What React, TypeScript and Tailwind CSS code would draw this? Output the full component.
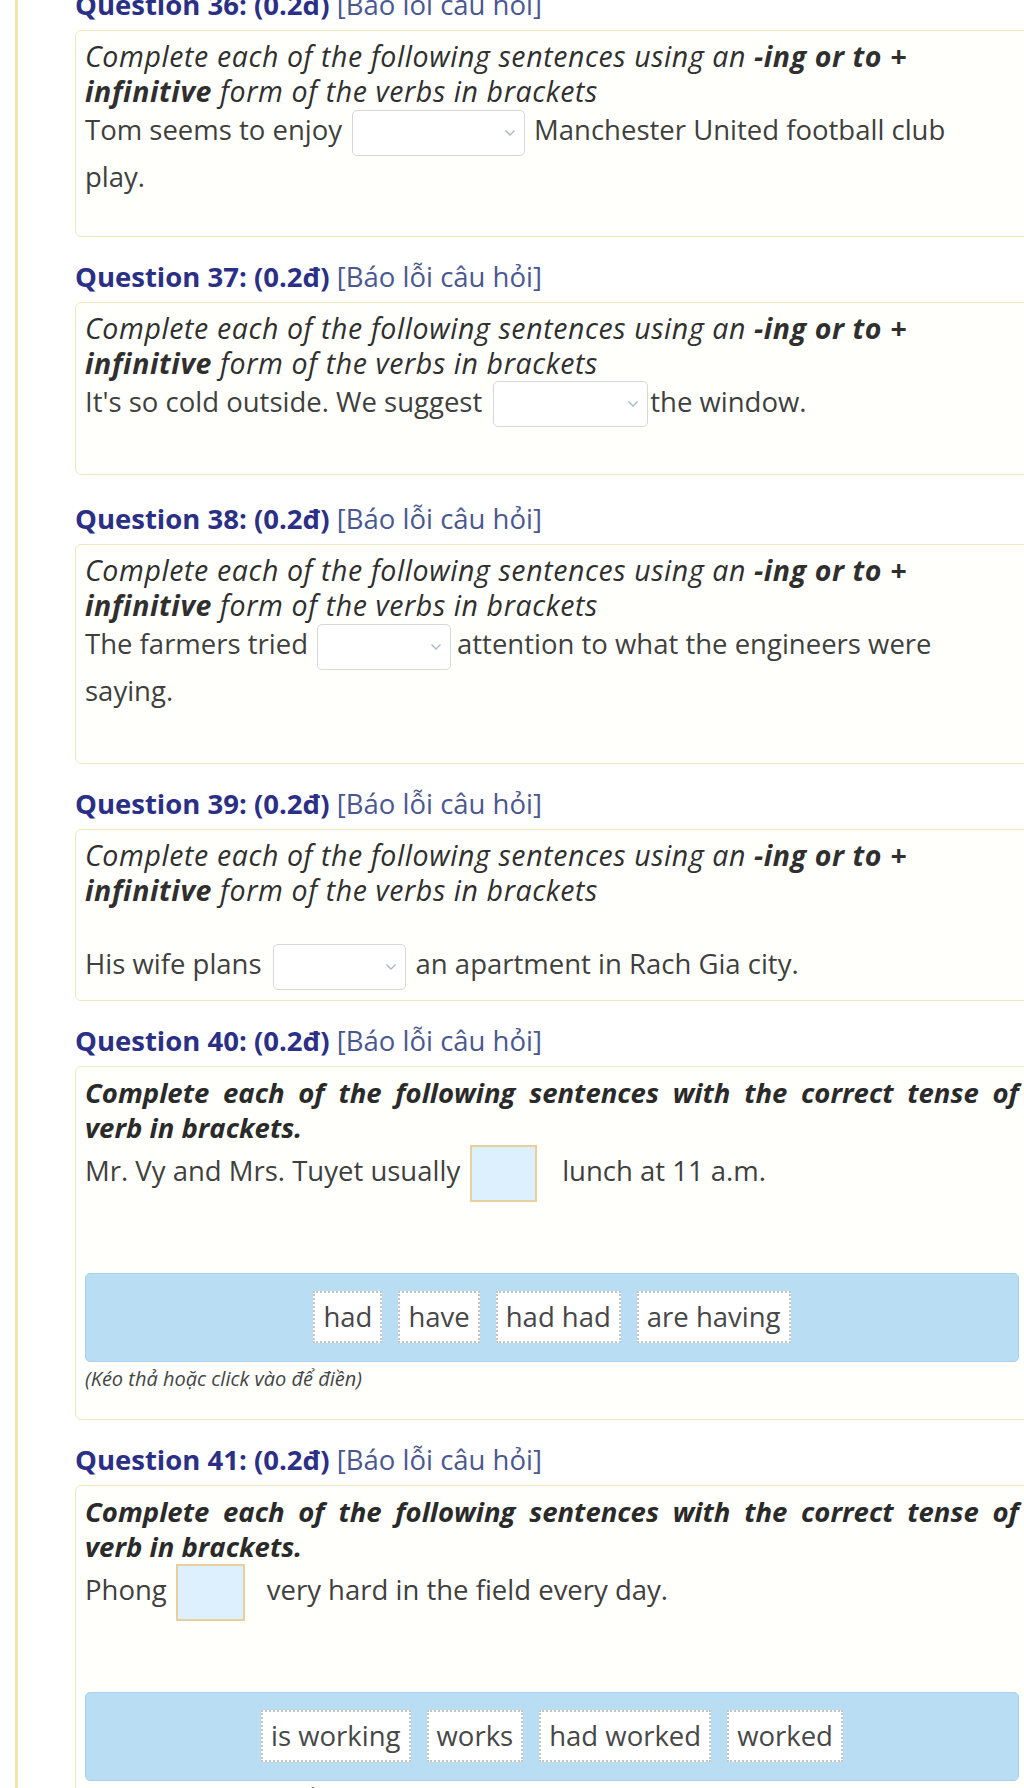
import React from 'react'

function Dropdown({ className }: { className: string }) {
    return (
        <span className={'relative inline-block h-[46px] rounded-[5px] border border-[#d7d7d7] bg-white align-middle ' + className}>
            <svg width="12" height="8" viewBox="0 0 12 8" className="absolute right-[8px] top-1/2 -translate-y-1/2">
                <path d="M1.5 1.5 L6 6 L10.5 1.5" fill="none" stroke="#a7bacb" strokeWidth="1.4" />
            </svg>
        </span>
    )
}

function DropBox({ className }: { className: string }) {
    return <span className={'inline-block h-[57px] w-[67px] border-2 border-[#e8cf9b] bg-[#ddf0fd] align-middle ' + className} />
}

function Heading({ num, top }: { num: number; top: string }) {
    return (
        <div className={top + ' mb-[8px] whitespace-nowrap leading-[34px]'}>
            <span className="font-bold text-[#2b2f85]">Question {num}: (0.2đ)</span>{' '}
            <span className="text-[#4b5890]">[Báo lỗi câu hỏi]</span>
        </div>
    )
}

function IngIntro() {
    return (
        <div className="whitespace-nowrap text-[28.5px] italic leading-[35px] tracking-[0.6px] text-[#2f2f2f]">
            Complete each of the following sentences using an <b>-ing or to +</b>
            <br />
            <b>infinitive</b> form of the verbs in brackets
        </div>
    )
}

function TenseIntro() {
    return (
        <div className="whitespace-nowrap font-bold italic leading-[35px] text-[#2a2a2a]">
            <div className="flex justify-between">
                <span>Complete</span><span>each</span><span>of</span><span>the</span><span>following</span>
                <span>sentences</span><span>with</span><span>the</span><span>correct</span><span>tense</span><span>of</span>
            </div>
            <div>verb in brackets.</div>
        </div>
    )
}

function WordBank({ words }: { words: string[] }) {
    return (
        <div className="flex h-[89px] items-center justify-center gap-[16px] rounded-[5px] border border-[#a9d1eb] bg-[#b9def4]">
            {words.map((w) => (
                <span key={w} className="flex h-[52px] items-center border-2 border-dotted border-[#c4c4c4] bg-white px-[8px] text-[#474747]">
                    {w}
                </span>
            ))}
        </div>
    )
}

const card = 'rounded-[6px] border border-[#efe6c3] bg-[#fffffb] pl-[9px] pr-[10px] pt-[8px]'
const sentence = 'whitespace-nowrap leading-[42px] text-[#3f3f3f]'

export default function App() {
    return (
        <div className="flex h-[1788px] overflow-hidden bg-white font-['Open_Sans',sans-serif] text-[27.5px]">
            <div className="ml-[15px] w-[3px] shrink-0 bg-[#efe6a9]" />
            <div className="-mr-[6px] -mt-[12px] ml-[57px] flex-1">
                {/* question 36 */}
                <Heading num={36} top="" />
                <div className={card + ' pb-[38px]'}>
                    <IngIntro />
                    <div className={sentence}>
                        Tom seems to enjoy<Dropdown className="ml-[10px] mr-[9px] w-[173px]" />Manchester United football club
                        <br />
                        play.
                    </div>
                </div>

                {/* question 37 */}
                <Heading num={37} top="mt-[23px]" />
                <div className={card + ' pb-[47px]'}>
                    <IngIntro />
                    <div className={sentence}>
                        It's so cold outside. We suggest<Dropdown className="ml-[11px] mr-[2px] w-[155px]" />the window.
                    </div>
                </div>

                {/* question 38 */}
                <Heading num={38} top="mt-[27px]" />
                <div className={card + ' pb-[51px]'}>
                    <IngIntro />
                    <div className={sentence}>
                        The farmers tried<Dropdown className="ml-[9px] mr-[6px] w-[134px]" />attention to what the engineers were
                        <br />
                        saying.
                    </div>
                </div>

                {/* question 39 */}
                <Heading num={39} top="mt-[23px]" />
                <div className={card + ' pb-[10px]'}>
                    <IngIntro />
                    <div className="h-[35px]" />
                    <div className={sentence}>
                        His wife plans<Dropdown className="ml-[11px] mr-[10px] w-[133px]" />an apartment in Rach Gia city.
                    </div>
                </div>

                {/* question 40 */}
                <Heading num={40} top="mt-[23px]" />
                <div className={card + ' pb-[26px]'}>
                    <TenseIntro />
                    <div className={sentence}>
                        Mr. Vy and Mrs. Tuyet usually<DropBox className="ml-[10px] mr-[25px]" />lunch at 11 a.m.
                    </div>
                    <div className="mt-[71px]">
                        <WordBank words={['had', 'have', 'had had', 'are having']} />
                    </div>
                    <div className="mt-[3px] text-[20px] italic leading-[28px] text-[#444]">(Kéo thả hoặc click vào để điền)</div>
                </div>

                {/* question 41 */}
                <Heading num={41} top="mt-[23px]" />
                <div className={card + ' pb-[24px]'}>
                    <TenseIntro />
                    <div className={sentence}>
                        Phong<DropBox className="ml-[9px] mr-[22px] w-[69px]" />very hard in the field every day.
                    </div>
                    <div className="mt-[71px]">
                        <WordBank words={['is working', 'works', 'had worked', 'worked']} />
                    </div>
                    <div className="mt-[3px] text-[20px] italic leading-[28px] text-[#444]">(Kéo thả hoặc click vào để điền)</div>
                </div>
            </div>
        </div>
    )
}
